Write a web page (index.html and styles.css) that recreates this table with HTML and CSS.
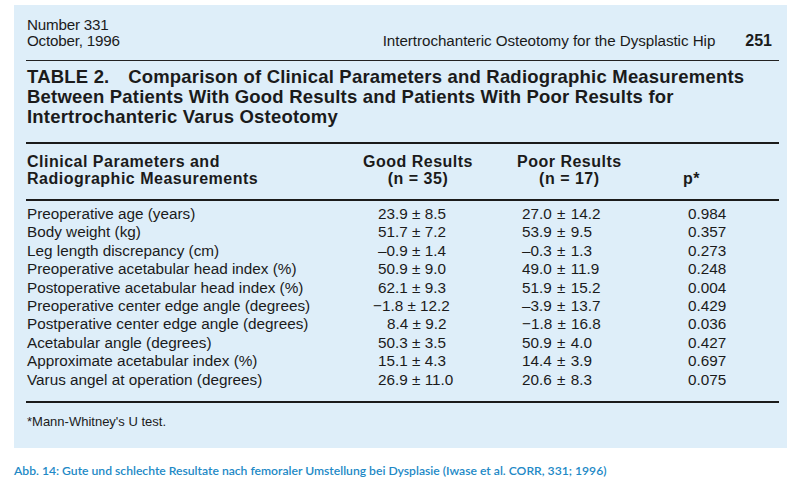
FILE: index.html
```html
<!DOCTYPE html>
<html lang="en">
<head>
<meta charset="utf-8">
<title>Table 2</title>
<link rel="stylesheet" href="styles.css">
</head>
<body>
<div class="panel">
  <div class="running-head">
    <div class="issue"><div>Number 331</div><div>October, 1996</div></div>
    <div class="journal"><span class="article">Intertrochanteric Osteotomy for the Dysplastic Hip</span><span class="page">251</span></div>
  </div>
  <h1 class="title">TABLE 2.&emsp;Comparison of Clinical Parameters and Radiographic Measurements Between Patients With Good Results and Patients With Poor Results for Intertrochanteric Varus Osteotomy</h1>
  <table class="data">
    <colgroup>
      <col class="c-label"><col class="c-good"><col class="c-poor"><col class="c-p">
    </colgroup>
    <thead>
      <tr>
        <th class="th-label">Clinical Parameters and<br>Radiographic Measurements</th>
        <th class="th-good"><span class="hd">Good Results<br>(n = 35)</span></th>
        <th class="th-poor"><span class="hd">Poor Results<br>(n = 17)</span></th>
        <th class="th-p"><span class="hd">p*</span></th>
      </tr>
    </thead>
    <tbody>
      <tr><td>Preoperative age (years)</td><td class="v-good">23.9 ± 8.5</td><td class="v-poor">27.0 ± 14.2</td><td class="v-p">0.984</td></tr>
      <tr><td>Body weight (kg)</td><td class="v-good">51.7 ± 7.2</td><td class="v-poor">53.9 ± 9.5</td><td class="v-p">0.357</td></tr>
      <tr><td>Leg length discrepancy (cm)</td><td class="v-good">–0.9 ± 1.4</td><td class="v-poor">–0.3 ± 1.3</td><td class="v-p">0.273</td></tr>
      <tr><td>Preoperative acetabular head index (%)</td><td class="v-good">50.9 ± 9.0</td><td class="v-poor">49.0 ± 11.9</td><td class="v-p">0.248</td></tr>
      <tr><td>Postoperative acetabular head index (%)</td><td class="v-good">62.1 ± 9.3</td><td class="v-poor">51.9 ± 15.2</td><td class="v-p">0.004</td></tr>
      <tr><td>Preoperative center edge angle (degrees)</td><td class="v-good neg">−1.8 ± 12.2</td><td class="v-poor">–3.9 ± 13.7</td><td class="v-p">0.429</td></tr>
      <tr><td>Postperative center edge angle (degrees)</td><td class="v-good single">8.4 ± 9.2</td><td class="v-poor">−1.8 ± 16.8</td><td class="v-p">0.036</td></tr>
      <tr><td>Acetabular angle (degrees)</td><td class="v-good">50.3 ± 3.5</td><td class="v-poor">50.9 ± 4.0</td><td class="v-p">0.427</td></tr>
      <tr><td>Approximate acetabular index (%)</td><td class="v-good">15.1 ± 4.3</td><td class="v-poor">14.4 ± 3.9</td><td class="v-p">0.697</td></tr>
      <tr><td>Varus angel at operation (degrees)</td><td class="v-good">26.9 ± 11.0</td><td class="v-poor">20.6 ± 8.3</td><td class="v-p">0.075</td></tr>
    </tbody>
  </table>
  <p class="footnote">*Mann-Whitney's U test.</p>
</div>
<p class="caption">Abb. 14: Gute und schlechte Resultate nach femoraler Umstellung bei Dysplasie (Iwase et al. CORR, 331; 1996)</p>
</body>
</html>
```
FILE: styles.css
```css
html, body {
  margin: 0;
  padding: 0;
  background: #ffffff;
}

body {
  width: 802px;
  height: 483px;
  overflow: hidden;
  font-family: "Liberation Sans", Arial, sans-serif;
  color: #1b1b1b;
}

.panel {
  margin: 5px 0 0 14px;
  width: 773px;
  height: 443px;
  box-sizing: border-box;
  background: #deeef9;
  padding: 12px 8px 0 12px;
}

.running-head {
  display: flex;
  justify-content: space-between;
  align-items: flex-end;
  border-bottom: 1.5px solid #222;
  padding: 0 7px 12px 1px;
  font-size: 15.2px;
  line-height: 15.5px;
}

.issue {
  letter-spacing: -0.2px;
}

.journal {
  display: flex;
  align-items: baseline;
}

.article {
  letter-spacing: -0.05px;
}

.page {
  font-weight: bold;
  font-size: 16px;
  margin-left: 30px;
}

.title {
  margin: 6px 0 0 1px;
  font-size: 18.5px;
  line-height: 20px;
  font-weight: bold;
  letter-spacing: 0.2px;
  width: 752px;
}

.data {
  margin-top: 15px;
  width: 753px;
  border-collapse: collapse;
  table-layout: fixed;
  font-size: 15.3px;
}

.c-label { width: 337px; }
.c-good { width: 154px; }
.c-poor { width: 166px; }
.c-p { width: 96px; }

.data thead tr {
  border-top: 2px solid #1b1b1b;
  border-bottom: 2px solid #1b1b1b;
}

.data th {
  text-align: left;
  vertical-align: bottom;
  padding: 9px 0 12px 0;
  font-size: 16px;
  line-height: 17px;
  font-weight: bold;
  letter-spacing: 0.5px;
}

.th-label {
  padding-left: 1px !important;
}

.hd {
  display: inline-block;
  text-align: center;
}

.data tbody tr:first-child td {
  padding-top: 4px;
}

.data tbody tr:last-child td {
  padding-bottom: 12px;
}

.data tbody tr:last-child {
  border-bottom: 2px solid #1b1b1b;
}

.data td {
  padding: 0;
  line-height: 18.4px;
  white-space: nowrap;
}

.data td:first-child {
  padding-left: 1px;
}

.v-good { padding-left: 15px !important; }
.v-good.neg { padding-left: 10px !important; }
.v-good.single { padding-left: 24px !important; }
.v-poor { padding-left: 5px !important; word-spacing: 1px; }
.v-p { padding-left: 5px !important; }

.footnote {
  margin: 11px 0 0 1px;
  font-size: 13px;
}

.caption {
  margin: 15px 0 0 14px;
  font-family: "Lato", "Open Sans", sans-serif;
  font-weight: 600;
  font-size: 12.15px;
  color: #2289c6;
}
```
